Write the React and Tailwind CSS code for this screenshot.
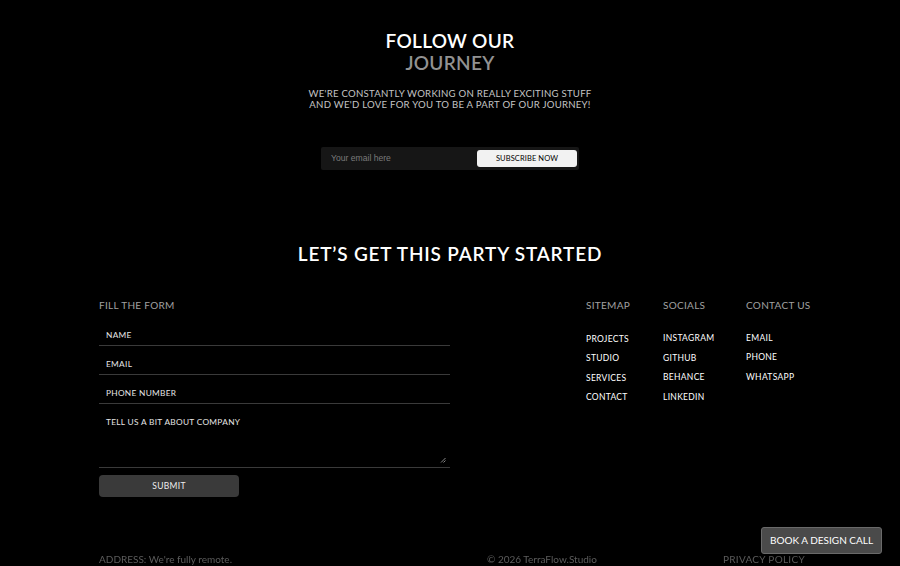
import React from "react";

export default function App() {
  const font = { fontFamily: "Lato, 'Noto Sans', sans-serif" };
  return (
    <div className="w-[900px] h-[566px] bg-black text-white overflow-hidden relative" style={font}>
      <div className="flex flex-col items-center pt-[30px]">
        <h2 className="text-[19px] leading-[22px] font-semibold tracking-[0.3px] text-center">
          <span className="block text-white">FOLLOW OUR</span>
          <span className="block text-[#929292]">JOURNEY</span>
        </h2>
        <p className="mt-[14px] text-[9.6px] leading-[11px] tracking-[0.25px] text-[#c4c4c4] text-center">
          WE'RE CONSTANTLY WORKING ON REALLY EXCITING STUFF
          <br />
          AND WE'D LOVE FOR YOU TO BE A PART OF OUR JOURNEY!
        </p>
        <div className="mt-[37px] w-[258px] h-[23px] bg-[#161616] rounded-[2px] flex items-center pl-[10px] pr-[2px]">
          <span className="flex-1 text-[8.6px] text-[#7a7a7a]" style={{ fontFamily: "'Liberation Sans', sans-serif" }}>Your email here</span>
          <button className="w-[100px] h-[17px] bg-[#f2f2f2] rounded-[3px] text-black text-[7.5px] tracking-[0.1px]">SUBSCRIBE NOW</button>
        </div>
        <h2 className="mt-[73px] text-[19px] leading-[22px] font-semibold tracking-[0.8px]">LET’S GET THIS PARTY STARTED</h2>
      </div>

      <div className="ml-[99px] mr-[95px] mt-[34px] flex">
        <div className="w-[351px]">
          <div className="text-[10px] leading-[13px] tracking-[0.3px] text-[#a0a0a0]">FILL THE FORM</div>
          <div className="mt-[5px] flex flex-col text-[8.3px] leading-[10px] tracking-[0.3px] text-[#e5e5e5]">
            <div className="h-[29px] pl-[7px] pt-[13px] border-b border-[#3a3a3a]">NAME</div>
            <div className="h-[29px] pl-[7px] pt-[13px] border-b border-[#3a3a3a]">EMAIL</div>
            <div className="h-[29px] pl-[7px] pt-[13px] border-b border-[#3a3a3a]">PHONE NUMBER</div>
            <div className="h-[64px] pl-[7px] pt-[13px] border-b border-[#3a3a3a] relative">
              TELL US A BIT ABOUT COMPANY
              <svg className="absolute right-[4px] bottom-[4px]" width="6" height="6" viewBox="0 0 6 6">
                <path d="M5.5 1 L1 5.5 M5.5 3.5 L3.5 5.5" stroke="#aaa" strokeWidth="0.8" />
              </svg>
            </div>
          </div>
          <button className="mt-[7px] w-[140px] h-[22px] bg-[#3a3a3a] rounded-[4px] text-[8.5px] tracking-[0.3px] text-[#eee]">SUBMIT</button>
        </div>
        <div className="ml-auto flex text-[8.5px] tracking-[0.3px]">
          <div className="w-[77px]">
            <div className="text-[10px] leading-[13px] text-[#a0a0a0]">SITEMAP</div>
            <div className="mt-[22px] flex flex-col gap-[9.3px] text-white">
              <span className="leading-[10px]">PROJECTS</span>
              <span className="leading-[10px]">STUDIO</span>
              <span className="leading-[10px]">SERVICES</span>
              <span className="leading-[10px]">CONTACT</span>
            </div>
          </div>
          <div className="w-[83px]">
            <div className="text-[10px] leading-[13px] text-[#a0a0a0]">SOCIALS</div>
            <div className="mt-[21px] flex flex-col gap-[9px] text-white">
              <span className="leading-[10px]">INSTAGRAM</span>
              <span className="leading-[10px] mt-[1px]">GITHUB</span>
              <span className="leading-[10px]">BEHANCE</span>
              <span className="leading-[10px] mt-[1px]">LINKEDIN</span>
            </div>
          </div>
          <div className="w-[59px]">
            <div className="text-[10px] leading-[13px] text-[#a0a0a0] whitespace-nowrap">CONTACT US</div>
            <div className="mt-[21px] flex flex-col gap-[9.3px] text-white">
              <span className="leading-[10px]">EMAIL</span>
              <span className="leading-[10px]">PHONE</span>
              <span className="leading-[10px]">WHATSAPP</span>
            </div>
          </div>
        </div>
      </div>

      <div className="absolute left-[99px] right-[95px] top-[552px] flex text-[10px] text-[#5c5c5c] blur-[0.4px]">
        <span>ADDRESS: We're fully remote.</span>
        <span className="ml-[255px]">© 2026 TerraFlow.Studio</span>
        <span className="ml-auto tracking-[0.3px]">PRIVACY POLICY</span>
      </div>

      <button className="absolute left-[761px] top-[527px] w-[121px] h-[27px] rounded-[3px] bg-[#4a4a4a] border border-[#6a6a6a] text-[10px] text-white tracking-[0px] shadow-[0_0_6px_rgba(0,0,0,0.6)]">
        BOOK A DESIGN CALL
      </button>
    </div>
  );
}
